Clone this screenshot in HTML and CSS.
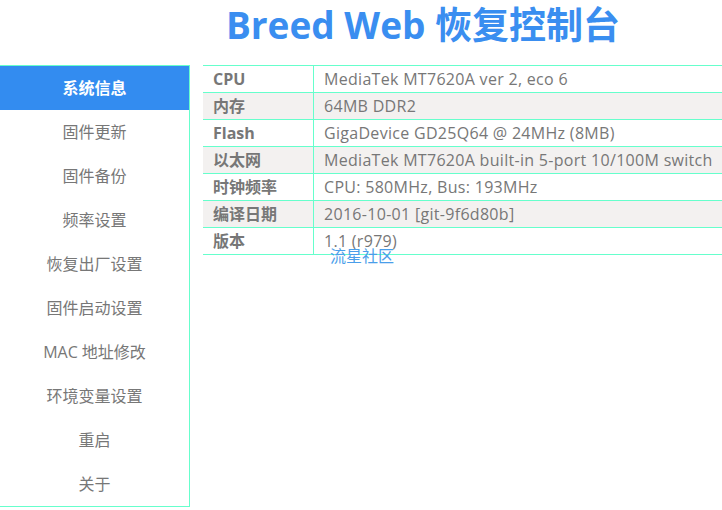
FILE: index.html
```
<!DOCTYPE html>
<html lang="zh-CN">
<head>
<meta charset="utf-8">
<title>Breed Web 恢复控制台</title>
<link rel="stylesheet" href="styles.css">
</head>
<body>
<header class="header"><h1 class="title">Breed Web 恢复控制台</h1></header>
<div class="main">
  <nav class="sidebar">
    <a class="nav-item active">系统信息</a>
    <a class="nav-item">固件更新</a>
    <a class="nav-item">固件备份</a>
    <a class="nav-item">频率设置</a>
    <a class="nav-item">恢复出厂设置</a>
    <a class="nav-item">固件启动设置</a>
    <a class="nav-item">MAC 地址修改</a>
    <a class="nav-item">环境变量设置</a>
    <a class="nav-item">重启</a>
    <a class="nav-item">关于</a>
  </nav>
  <section class="content">
    <table class="info">
      <tr><th>CPU</th><td>MediaTek MT7620A ver 2, eco 6</td></tr>
      <tr><th>内存</th><td>64MB DDR2</td></tr>
      <tr><th>Flash</th><td>GigaDevice GD25Q64 @ 24MHz (8MB)</td></tr>
      <tr><th>以太网</th><td>MediaTek MT7620A built-in 5-port 10/100M switch</td></tr>
      <tr><th>时钟频率</th><td>CPU: 580MHz, Bus: 193MHz</td></tr>
      <tr><th>编译日期</th><td>2016-10-01 [git-9f6d80b]</td></tr>
      <tr><th>版本</th><td>1.1 (r979)</td></tr>
    </table>
    <a class="credit">流星社区</a>
  </section>
</div>
</body>
</html>
```
FILE: styles.css
```
html, body { margin: 0; padding: 0; background: #fff; }
body {
  font-family: "Open Sans", "Noto Sans CJK SC", sans-serif;
  color: #777;
  overflow: hidden;
}
.header { height: 65px; padding-left: 124px; text-align: center; }
.title {
  margin: 0;
  padding-top: 2px;
  font-family: "Open Sans", "Noto Sans CJK SC", sans-serif;
  font-size: 37px;
  font-weight: 700;
  line-height: 46px;
  color: #3a8ef0;
}
.main { display: flex; align-items: flex-start; gap: 13px; }
.sidebar {
  width: 189px;
  flex: none;
  display: flex;
  flex-direction: column;
  border-top: 1px solid #66ffcc;
  border-right: 1px solid #66ffcc;
  border-bottom: 1px solid #66ffcc;
}
.nav-item {
  height: 44px;
  line-height: 44px;
  text-align: center;
  font-size: 16px;
  color: #777;
}
.nav-item.active { background: #338cf0; color: #fff; font-weight: 700; }
.content { flex: 1; min-width: 0; position: relative; }
.info {
  border-collapse: collapse;
  white-space: nowrap;
  font-size: 16px;
  width: 100%;
}
.info th, .info td {
  height: 26px;
  padding: 0 0 0 10px;
  border-top: 1px solid #66ffcc;
  border-bottom: 1px solid #66ffcc;
  text-align: left;
  line-height: 26px;
  color: #777;
}
.info td { letter-spacing: 0.3px; }
.info th { width: 100px; font-weight: 700; border-right: 1px solid #66ffcc; }
.info tr:nth-child(even) th, .info tr:nth-child(even) td { background: #f3f1f0; }
.credit {
  position: absolute;
  left: 127px;
  top: 178px;
  font-size: 16px;
  color: #4a9eea;
}
```
